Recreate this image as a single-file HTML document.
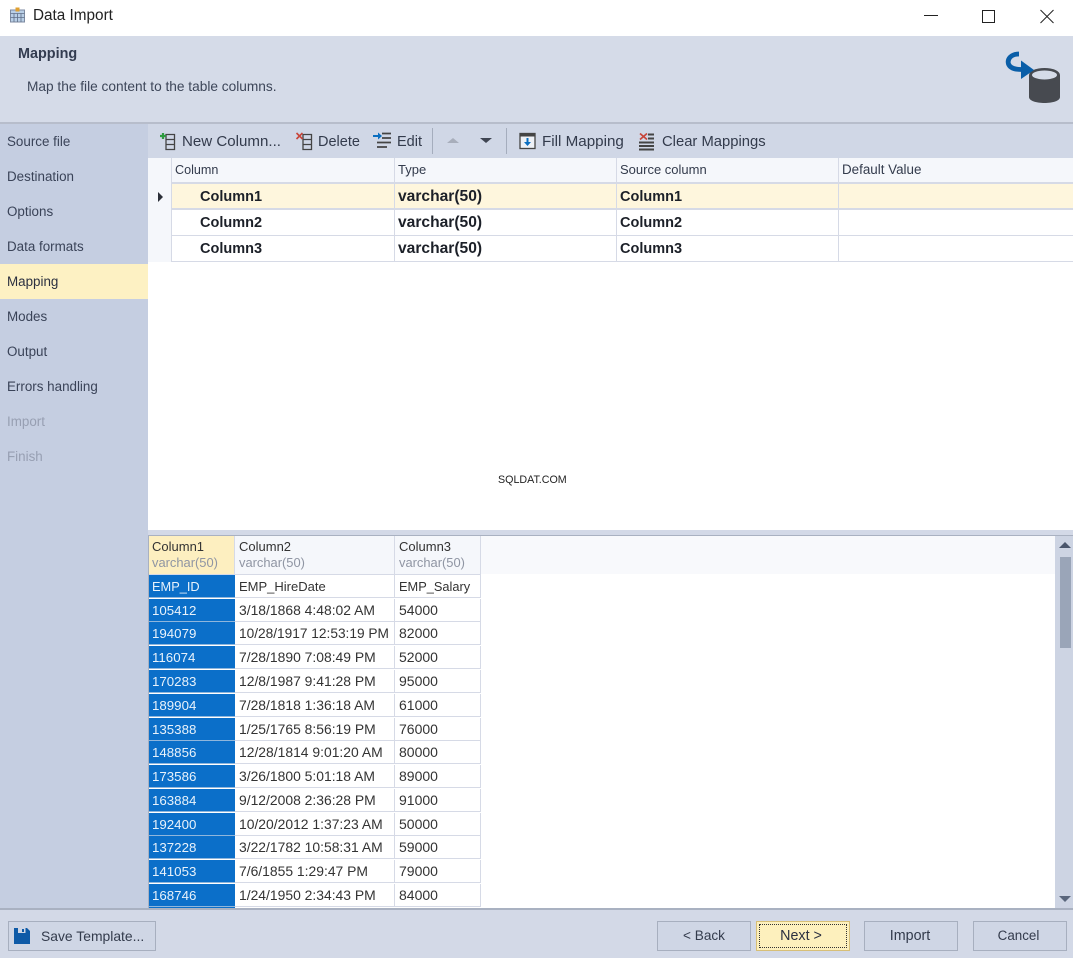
<!DOCTYPE html>
<html><head><meta charset="utf-8"><style>
html,body{margin:0;padding:0}
body{width:1073px;height:958px;overflow:hidden;position:relative;background:#fff;font-family:"Liberation Sans",sans-serif;font-size:14.5px;color:#333b4c}
.a{position:absolute}
.t{position:absolute;white-space:nowrap;line-height:18px}
.s{left:7px;color:#3a4358;font-size:13.4px}
.b{font-weight:bold;color:#1c2028}
.v{font-size:15.6px}
.h{font-size:13px}
.g{position:absolute;background:#d6dae6}
.c1{position:absolute;left:149px;width:86px;height:23px;background:#0b6fc9;color:#e8f2fb;box-sizing:border-box;padding-left:3px;line-height:23px;white-space:nowrap;border-bottom:1px solid #8fb6dc;font-size:13.3px;overflow:hidden}
.c2{position:absolute;left:235px;width:160px;height:23px;background:#fff;box-sizing:border-box;padding-left:4px;line-height:23px;white-space:nowrap;border-bottom:1px solid #d6dae6;border-right:1px solid #d6dae6;color:#333;font-size:13.9px;overflow:hidden}
.c3{position:absolute;left:395px;width:86px;height:23px;background:#fff;box-sizing:border-box;padding-left:4px;line-height:23px;white-space:nowrap;border-bottom:1px solid #d6dae6;border-right:1px solid #d6dae6;color:#333;font-size:14px;overflow:hidden}
.btn{position:absolute;top:921px;height:30px;box-sizing:border-box;border:1px solid #a7afbf;background:#cfd6e5;text-align:center;line-height:28px;color:#333b4c;font-size:13.6px}
.hd{position:absolute;top:536px;height:38px;box-sizing:border-box;border-right:1px solid #d6dae6;background:#f5f7fb;padding:3px 0 0 3px;line-height:16px;font-size:13px;color:#333}
.hd span{color:#8f95a3;font-size:12.9px;display:block}
</style></head><body>

<div class="a" style="left:0;top:36px;width:1073px;height:86px;background:#d5dbe8"></div>
<div class="a" style="left:0;top:122px;width:1073px;height:2px;background:#b7bdcb"></div>
<div class="a" style="left:0;top:124px;width:148px;height:784px;background:#c5cee1"></div>
<div class="a" style="left:148px;top:124px;width:925px;height:34px;background:#d0d7e6"></div>
<div class="a" style="left:0;top:908px;width:1073px;height:2px;background:#a9b1c1"></div>
<div class="a" style="left:0;top:910px;width:1073px;height:48px;background:#d3d9e7"></div>

<svg class="a" style="left:9px;top:6px" width="18" height="18" viewBox="0 0 18 18"><rect x="1.500" y="4" width="14" height="12" fill="#b9cfe6" stroke="#7d8aa0"/><path d="M1.500 7.500h14M5 7.500v8.500M8.500 7.500v8.500M12 7.500v8.500M1.500 11.500h14" stroke="#5f6f88" stroke-width=".8" fill="none"/><path d="M6.500 1.500h4v4h-4z" fill="#e0a030"/></svg>
<div class="t" style="left:33px;top:7px;font-size:15.300px;color:#222">Data Import</div>
<svg class="a" style="left:920px;top:6px" width="140" height="20" viewBox="0 0 140 20" fill="none" stroke="#222" stroke-width="1"><path d="M4 9.500h14"/><rect x="62.500" y="4.500" width="12" height="12"/><path d="M120.500 4l13 13M133.500 4l-13 13"/></svg>

<div class="t" style="left:18px;top:45px;font-weight:bold;font-size:14.400px;color:#333c50">Mapping</div>
<div class="t" style="left:27px;top:78px;font-size:13.700px;color:#3d4659">Map the file content to the table columns.</div>

<svg class="a" style="left:1005px;top:50px" width="58" height="58" viewBox="0 0 58 58"><path d="M24 25v22c0 8 31 8 31 0V25z" fill="#474a50"/><ellipse cx="39.500" cy="25" rx="15.500" ry="7" fill="#474a50"/><ellipse cx="39.500" cy="25" rx="12.500" ry="4.500" fill="#d5dbe8"/><path d="M14 4C6 4 2 9 3.500 14c1.500 4 7 5.500 13 5.500" fill="none" stroke="#0a5ea8" stroke-width="4.800"/><path d="M16 10.500l13 9.500-13 9z" fill="#0a5ea8"/></svg>

<div class="t s" style="top:133px">Source file</div>
<div class="t s" style="top:168px">Destination</div>
<div class="t s" style="top:203px">Options</div>
<div class="t s" style="top:238px">Data formats</div>
<div class="a" style="left:0;top:264px;width:148px;height:35px;background:#fdf1c3"></div>
<div class="t s" style="top:273px;color:#2b3040">Mapping</div>
<div class="t s" style="top:308px">Modes</div>
<div class="t s" style="top:343px">Output</div>
<div class="t s" style="top:378px">Errors handling</div>
<div class="t s" style="top:413px;color:#979fb2">Import</div>
<div class="t s" style="top:448px;color:#979fb2">Finish</div>

<!-- toolbar -->
<svg class="a" style="left:158px;top:131px" width="20" height="20" viewBox="0 0 20 20" fill="none"><path d="M8 3.500h8.500v15H8zM8 8.500h8.500M8 13.500h8.500" stroke="#444" stroke-width="1.300"/><path d="M5 2v6M2 5h6" stroke="#2e9b3f" stroke-width="2.200"/></svg>
<div class="t" style="left:182px;top:133px;font-size:15.100px">New Column...</div>
<svg class="a" style="left:295px;top:131px" width="20" height="20" viewBox="0 0 20 20" fill="none"><path d="M8 3.500h8.500v15H8zM8 8.500h8.500M8 13.500h8.500" stroke="#444" stroke-width="1.300"/><path d="M1.500 2l6 6M7.500 2l-6 6" stroke="#c8453a" stroke-width="1.600"/></svg>
<div class="t" style="left:318px;top:133px">Delete</div>
<svg class="a" style="left:373px;top:131px" width="20" height="20" viewBox="0 0 20 20" fill="none"><path d="M0 5h6" stroke="#0a6ec0" stroke-width="2"/><path d="M5 1.500l4 3.500-4 3.500z" fill="#0a6ec0"/><path d="M9 2.500h9M9 7h9M4 11.500h14M4 16h10" stroke="#444" stroke-width="1.800"/></svg>
<div class="t" style="left:397px;top:133px">Edit</div>
<div class="a" style="left:432px;top:128px;width:1px;height:26px;background:#a5adbd"></div>
<svg class="a" style="left:446px;top:135px" width="50" height="10" viewBox="0 0 50 10"><path d="M1 8l6-5 6 5z" fill="#a8aebb"/><path d="M34 3h12l-6 5z" fill="#3f4552"/></svg>
<div class="a" style="left:506px;top:128px;width:1px;height:26px;background:#a5adbd"></div>
<svg class="a" style="left:518px;top:131px" width="20" height="20" viewBox="0 0 20 20" fill="none"><rect x="2" y="2.500" width="15" height="15" stroke="#444" stroke-width="1.300" fill="#eef1f6"/><path d="M2 3h15v2.500H2z" fill="#444"/><path d="M9.500 7v6" stroke="#0a6ec0" stroke-width="2"/><path d="M6 11h7l-3.500 4z" fill="#0a6ec0"/></svg>
<div class="t" style="left:542px;top:133px;font-size:15.200px">Fill Mapping</div>
<svg class="a" style="left:639px;top:131px" width="20" height="20" viewBox="0 0 20 20" fill="none"><path d="M1 2.500l7 6M8 2.500l-7 6" stroke="#c8453a" stroke-width="1.700"/><path d="M9 3.500h6M9 7.500h6M0 11.500h15M0 15h15M0 18.500h15" stroke="#444" stroke-width="1.900"/></svg>
<div class="t" style="left:662px;top:133px;font-size:14.800px">Clear Mappings</div>

<!-- top grid -->
<div class="a" style="left:148px;top:158px;width:925px;height:25px;background:#f5f7fb"></div>
<div class="a" style="left:148px;top:183px;width:23px;height:79px;background:#f5f7fb"></div>
<div class="a" style="left:171px;top:183px;width:902px;height:26px;background:#fef6dd"></div>
<div class="g" style="left:171px;top:182px;width:902px;height:2px"></div>
<div class="g" style="left:171px;top:208px;width:902px;height:2px"></div>
<div class="g" style="left:171px;top:235px;width:902px;height:1px"></div>
<div class="g" style="left:171px;top:261px;width:902px;height:1px"></div>
<div class="g" style="left:171px;top:158px;width:1px;height:104px"></div>
<div class="g" style="left:394px;top:158px;width:1px;height:104px"></div>
<div class="g" style="left:616px;top:158px;width:1px;height:104px"></div>
<div class="g" style="left:838px;top:158px;width:1px;height:104px"></div>
<div class="t h" style="left:175px;top:161px;font-size:12.600px">Column</div>
<div class="t h" style="left:398px;top:161px">Type</div>
<div class="t h" style="left:620px;top:161px">Source column</div>
<div class="t h" style="left:842px;top:161px;font-size:13.400px">Default Value</div>
<svg class="a" style="left:157px;top:192px" width="7" height="10"><path d="M1 0l5 5-5 5z" fill="#2b2f38"/></svg>
<div class="t b" style="left:200px;top:188px">Column1</div><div class="t b v" style="left:398px;top:188px">varchar(50)</div><div class="t b" style="left:620px;top:188px">Column1</div>
<div class="t b" style="left:200px;top:214px">Column2</div><div class="t b v" style="left:398px;top:214px">varchar(50)</div><div class="t b" style="left:620px;top:214px">Column2</div>
<div class="t b" style="left:200px;top:240px">Column3</div><div class="t b v" style="left:398px;top:240px">varchar(50)</div><div class="t b" style="left:620px;top:240px">Column3</div>

<div class="t" style="left:498px;top:471px;font-size:10.700px;color:#222">SQLDAT.COM</div>

<!-- splitter -->
<div class="a" style="left:148px;top:530px;width:925px;height:5px;background:#d3d9e7"></div>
<div class="a" style="left:148px;top:535px;width:925px;height:1px;background:#a9b1c1"></div>
<div class="a" style="left:148px;top:535px;width:1px;height:373px;background:#a9b1c1"></div>

<!-- preview -->
<div class="a" style="left:481px;top:536px;width:574px;height:38px;background:#f8f9fc"></div>
<div class="hd" style="left:149px;width:86px;background:#fdefc0;color:#333">Column1<span>varchar(50)</span></div>
<div class="hd" style="left:235px;width:160px;padding-left:4px">Column2<span>varchar(50)</span></div>
<div class="hd" style="left:395px;width:86px;padding-left:4px">Column3<span>varchar(50)</span></div>
<div class="g" style="left:149px;top:574px;width:332px;height:1px"></div>

<div class="c1" style="top:575px;font-size:12.800px">EMP_ID</div><div class="c2" style="top:575px;font-size:13px">EMP_HireDate</div><div class="c3" style="top:575px;font-size:12.800px">EMP_Salary</div>
<div class="c1" style="top:599px">105412</div><div class="c2" style="top:599px">3/18/1868 4:48:02 AM</div><div class="c3" style="top:599px">54000</div>
<div class="c1" style="top:622px">194079</div><div class="c2" style="top:622px;font-size:13.700px">10/28/1917 12:53:19 PM</div><div class="c3" style="top:622px">82000</div>
<div class="c1" style="top:646px">116074</div><div class="c2" style="top:646px">7/28/1890 7:08:49 PM</div><div class="c3" style="top:646px">52000</div>
<div class="c1" style="top:670px">170283</div><div class="c2" style="top:670px">12/8/1987 9:41:28 PM</div><div class="c3" style="top:670px">95000</div>
<div class="c1" style="top:694px">189904</div><div class="c2" style="top:694px">7/28/1818 1:36:18 AM</div><div class="c3" style="top:694px">61000</div>
<div class="c1" style="top:718px">135388</div><div class="c2" style="top:718px">1/25/1765 8:56:19 PM</div><div class="c3" style="top:718px">76000</div>
<div class="c1" style="top:741px">148856</div><div class="c2" style="top:741px">12/28/1814 9:01:20 AM</div><div class="c3" style="top:741px">80000</div>
<div class="c1" style="top:765px">173586</div><div class="c2" style="top:765px">3/26/1800 5:01:18 AM</div><div class="c3" style="top:765px">89000</div>
<div class="c1" style="top:789px">163884</div><div class="c2" style="top:789px">9/12/2008 2:36:28 PM</div><div class="c3" style="top:789px">91000</div>
<div class="c1" style="top:813px">192400</div><div class="c2" style="top:813px">10/20/2012 1:37:23 AM</div><div class="c3" style="top:813px">50000</div>
<div class="c1" style="top:836px">137228</div><div class="c2" style="top:836px">3/22/1782 10:58:31 AM</div><div class="c3" style="top:836px">59000</div>
<div class="c1" style="top:860px">141053</div><div class="c2" style="top:860px">7/6/1855 1:29:47 PM</div><div class="c3" style="top:860px">79000</div>
<div class="c1" style="top:884px">168746</div><div class="c2" style="top:884px">1/24/1950 2:34:43 PM</div><div class="c3" style="top:884px">84000</div>
<div class="a" style="left:149px;top:907px;width:86px;height:1px;background:#0b6fc9"></div>

<!-- scrollbar -->
<div class="a" style="left:1055px;top:536px;width:18px;height:372px;background:#cdd4e3"></div>
<div class="a" style="left:1060px;top:557px;width:11px;height:91px;background:#9aa5b8"></div>
<svg class="a" style="left:1059px;top:541px" width="12" height="8"><path d="M0 7l6-6 6 6z" fill="#4a566c"/></svg>
<svg class="a" style="left:1059px;top:895px" width="12" height="8"><path d="M0 1h12l-6 6z" fill="#5a667c"/></svg>

<!-- footer -->
<div class="btn" style="left:8px;width:148px;text-align:left;padding-left:32px;font-size:13.900px">Save Template...</div>
<svg class="a" style="left:14px;top:928px" width="16" height="16" viewBox="0 0 16 16"><path d="M0 0h13l3 3v13H0z" fill="#0e5aa7"/><path d="M4 0h7.500v5H4z" fill="#cfd6e5"/><path d="M8 1h2v3H8z" fill="#0e5aa7"/></svg>
<div class="btn" style="left:657px;width:94px">&lt; Back</div>
<div class="btn" style="left:756px;width:94px;background:#fdf0bd;border-color:#d7bf77;color:#2b3040;font-size:14.300px;padding-right:4px">Next &gt;</div>
<div class="a" style="left:759px;top:924px;width:86px;height:22px;border:1px dotted #333"></div>
<div class="btn" style="left:864px;width:94px;font-size:14.300px;padding-right:2px">Import</div>
<div class="btn" style="left:973px;width:94px;font-size:13.400px;padding-right:3px">Cancel</div>
</body></html>
